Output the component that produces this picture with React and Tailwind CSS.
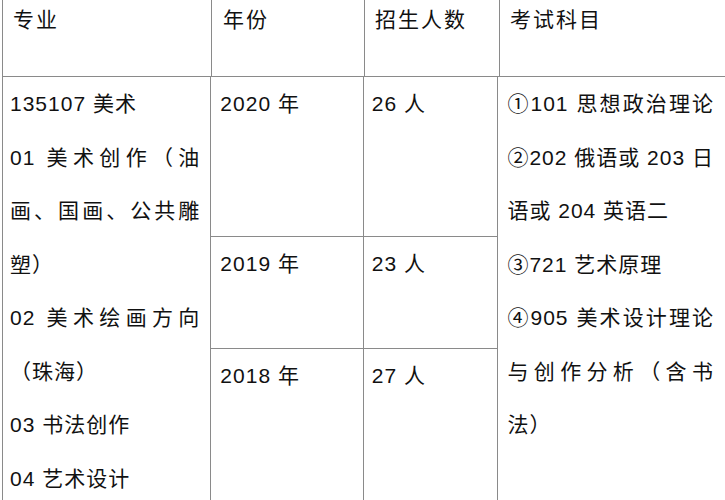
import React from "react";

const font = { fontFamily: '"Liberation Sans", "Noto Sans CJK SC", sans-serif' };

function L({ children, j }) {
  return (
    <div
      className={
        "leading-[53.5px] whitespace-nowrap " +
        (j ? "text-justify [text-align-last:justify]" : "")
      }
    >
      {children}
    </div>
  );
}

export default function App() {
  return (
    <div
      className="w-[725px] h-[500px] overflow-hidden bg-white text-[21px] tracking-[1px] text-[#111]"
      style={font}
    >
      <div className="ml-[2px] flex flex-col h-full border-l border-[#8a8a8a]">
        {/* header */}
        <div className="flex shrink-0 h-[77px] border-b border-[#8a8a8a] leading-[40px]">
          <div className="w-[208px] pl-[10px] tracking-[2px]">专业</div>
          <div className="w-[153px] border-l border-[#8a8a8a] pl-[11px] tracking-[2px]">年份</div>
          <div className="w-[135px] border-l border-[#8a8a8a] pl-[10px] tracking-[2px]">招生人数</div>
          <div className="flex-1 border-l border-[#8a8a8a] pl-[10px] tracking-[2px]">考试科目</div>
        </div>
        {/* body */}
        <div className="flex flex-1 min-h-0">
          <div className="w-[208px] pl-[7px] pr-[10px]">
            <L>135107 美术</L>
            <L j>01 美术创作（油</L>
            <L j>画、国画、公共雕</L>
            <L>塑）</L>
            <L j>02 美术绘画方向</L>
            <L>（珠海）</L>
            <L>03 书法创作</L>
            <L>04 艺术设计</L>
          </div>
          <div className="w-[153px] border-l border-[#8a8a8a] flex flex-col">
            <div className="shrink-0 h-[160px] border-b border-[#8a8a8a] pl-[9px]">
              <L>2020 年</L>
            </div>
            <div className="shrink-0 h-[112px] border-b border-[#8a8a8a] pl-[9px]">
              <L>2019 年</L>
            </div>
            <div className="flex-1 pl-[9px]">
              <L>2018 年</L>
            </div>
          </div>
          <div className="w-[135px] border-l border-[#8a8a8a] flex flex-col">
            <div className="shrink-0 h-[160px] border-b border-[#8a8a8a] pl-[8px]">
              <L>26 人</L>
            </div>
            <div className="shrink-0 h-[112px] border-b border-[#8a8a8a] pl-[8px]">
              <L>23 人</L>
            </div>
            <div className="flex-1 pl-[8px]">
              <L>27 人</L>
            </div>
          </div>
          <div className="flex-1 border-l border-[#8a8a8a] pl-[9px] pr-[11px]">
            <L j>①101 思想政治理论</L>
            <L j>②202 俄语或 203 日</L>
            <L>语或 204 英语二</L>
            <L>③721 艺术原理</L>
            <L j>④905 美术设计理论</L>
            <L j>与创作分析（含书</L>
            <L>法）</L>
          </div>
        </div>
      </div>
    </div>
  );
}
